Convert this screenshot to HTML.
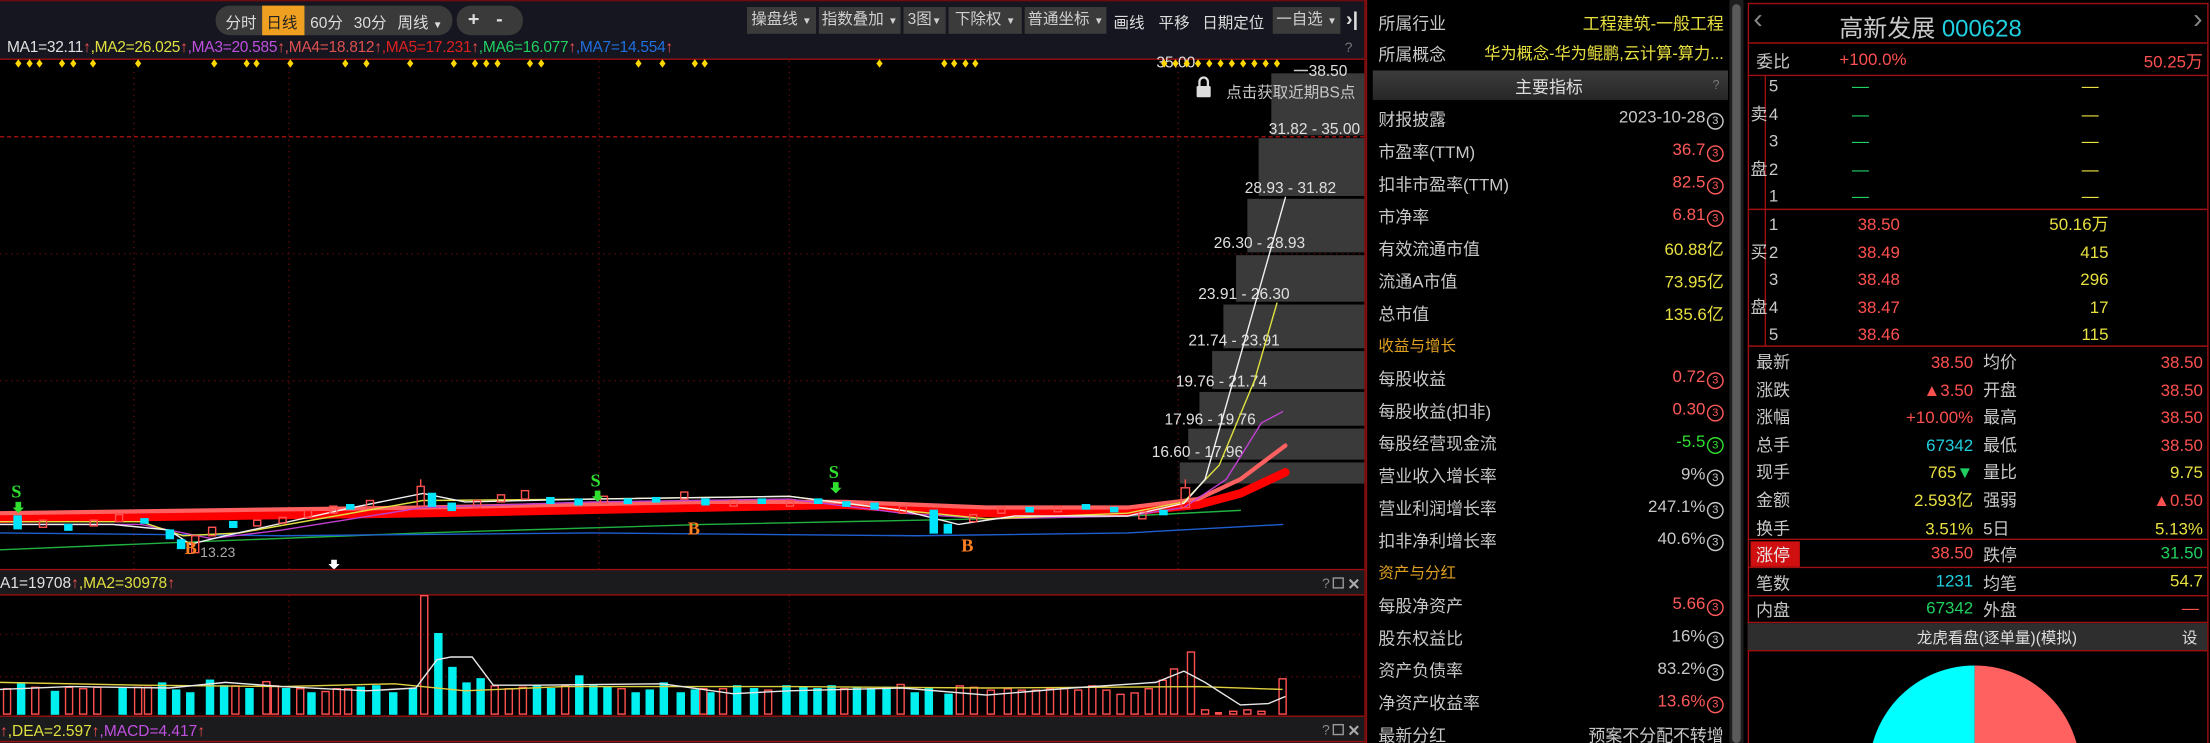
<!DOCTYPE html>
<html><head><meta charset="utf-8"><style>
html,body{margin:0;padding:0;background:#000;width:2210px;height:743px;overflow:hidden}
#w{position:absolute;left:0;top:0;width:1568px;height:527px;transform:scale(1.40944,1.40986);transform-origin:0 0;font-family:"Liberation Sans","Noto Sans CJK SC",sans-serif;color:#c8c8c8;overflow:hidden}
.a{position:absolute;white-space:nowrap}
.btn{position:absolute;top:5px;height:19px;line-height:19px;background:#3b3b3b;color:#d0d0d0;font-size:11px;text-align:center}
.n{font-family:"Liberation Sans Narrow","Liberation Sans","Noto Sans CJK SC",sans-serif}
.lab{position:absolute;left:978px;font-size:12px;color:#c8c8c8}
.val{position:absolute;right:345px;font-size:12px}
.c3{display:inline-block;width:10px;height:10px;border:1px solid currentColor;border-radius:50%;font-size:8px;line-height:10px;text-align:center;margin-left:1px;vertical-align:-1px}
.rp{position:absolute;font-size:12px}
</style></head><body><div id="w">

<div class="a" style="left:0;top:0;width:968px;height:28px;background:#15161f;border-top:1px solid #6a0c10"></div>
<div class="a" style="left:153px;top:4px;width:168px;height:21px;border-radius:10px;background:#3a3a3a"></div>
<div class="a" style="left:186px;top:4px;width:30px;height:21px;background:#f0a020"></div>
<div class="a" style="left:160px;top:8px;font-size:11px;color:#ddd">分时</div>
<div class="a" style="left:189px;top:8px;font-size:11px;color:#222">日线</div>
<div class="a" style="left:220px;top:8px;font-size:11px;color:#ddd">60分</div>
<div class="a" style="left:251px;top:8px;font-size:11px;color:#ddd">30分</div>
<div class="a" style="left:282px;top:8px;font-size:11px;color:#ddd">周线 <span style="font-size:7px">▼</span></div>
<div class="a" style="left:324px;top:4px;width:47px;height:21px;border-radius:10px;background:#3a3a3a"></div>
<div class="a" style="left:332px;top:5px;font-size:14px;color:#ddd;font-weight:bold">+</div>
<div class="a" style="left:352px;top:5px;font-size:14px;color:#ddd;font-weight:bold">-</div>
<div class="btn" style="left:530px;width:49px">操盘线 <span style="font-size:7px">▼</span></div>
<div class="btn" style="left:581px;width:58px">指数叠加 <span style="font-size:7px">▼</span></div>
<div class="btn" style="left:641px;width:30px">3图<span style="font-size:7px">▼</span></div>
<div class="btn" style="left:673px;width:52px">下除权 <span style="font-size:7px">▼</span></div>
<div class="btn" style="left:727px;width:58px">普通坐标 <span style="font-size:7px">▼</span></div>
<div class="a" style="left:790px;top:8px;font-size:11px;color:#ddd">画线</div>
<div class="a" style="left:822px;top:8px;font-size:11px;color:#ddd">平移</div>
<div class="a" style="left:853px;top:8px;font-size:11px;color:#ddd">日期定位</div>
<div class="btn" style="left:903px;width:48px">一自选 <span style="font-size:7px">▼</span></div>
<div class="a" style="left:955px;top:5px;font-size:14px;color:#ddd;font-weight:bold">›|</div>

<div class="a" style="left:0;top:28px;width:968px;height:14px;background:#15161f"></div>
<div class="a" style="left:5px;top:28px;font-size:11px;letter-spacing:-0.2px"><span style="color:#e0e0e0">MA1=32.11</span><span style="color:#f05050">↑</span><span style="color:#e0e040">,MA2=26.025</span><span style="color:#f05050">↑</span><span style="color:#c050e0">,MA3=20.585</span><span style="color:#f05050">↑</span><span style="color:#e05050">,MA4=18.812</span><span style="color:#f05050">↑</span><span style="color:#e02020">,MA5=17.231</span><span style="color:#f05050">↑</span><span style="color:#20d060">,MA6=16.077</span><span style="color:#f05050">↑</span><span style="color:#2070e0">,MA7=14.554</span><span style="color:#f05050">↑</span></div>
<div class="a" style="left:954px;top:29px;font-size:10px;color:#777">?</div>

<svg class="a" style="left:0;top:0" width="969" height="527" viewBox="0 0 969 527">
<line x1="0" y1="42" x2="968" y2="42" stroke="#9a1010" stroke-width="1"/>
<line x1="968.5" y1="0" x2="968.5" y2="527" stroke="#9a1010"/>
<g stroke="#5a0a0a" stroke-dasharray="1,3">
<line x1="95" y1="43" x2="95" y2="404"/><line x1="205" y1="43" x2="205" y2="404"/><line x1="425" y1="43" x2="425" y2="404"/><line x1="560" y1="43" x2="560" y2="404"/><line x1="836" y1="43" x2="836" y2="404"/>
<line x1="205" y1="422" x2="205" y2="508"/><line x1="560" y1="422" x2="560" y2="508"/>
<line x1="0" y1="180" x2="968" y2="180"/><line x1="0" y1="270" x2="968" y2="270"/>
<line x1="0" y1="450" x2="968" y2="450"/><line x1="0" y1="480" x2="968" y2="480"/>
</g>
<line x1="0" y1="97" x2="968" y2="97" stroke="#9a1010" stroke-dasharray="3,2"/>
<g fill="#3a3a3a">
<rect x="902" y="52" width="66" height="44"/>
<rect x="893" y="98" width="75" height="41"/>
<rect x="885" y="141" width="83" height="38"/>
<rect x="877" y="181" width="91" height="33"/>
<rect x="868" y="216" width="100" height="31"/>
<rect x="860" y="249" width="108" height="27"/>
<rect x="851" y="278" width="117" height="24"/>
<rect x="843" y="304" width="125" height="22"/>
<rect x="837" y="328" width="131" height="15"/>
</g>
<g fill="#e0e0e0" font-family="Liberation Sans,sans-serif" font-size="11" text-anchor="end">
<text x="956" y="54">38.50</text>
<text x="965" y="95">31.82 - 35.00</text>
<text x="948" y="137">28.93 - 31.82</text>
<text x="926" y="176">26.30 - 28.93</text>
<text x="915" y="212">23.91 - 26.30</text>
<text x="908" y="245">21.74 - 23.91</text>
<text x="899" y="274">19.76 - 21.74</text>
<text x="891" y="301">17.96 - 19.76</text>
<text x="882" y="324">16.60 - 17.96</text>
<text x="848" y="48">35.00</text>
</g>
<line x1="918" y1="50" x2="928" y2="50" stroke="#ccc"/>
<rect x="849" y="61" width="10" height="8" rx="1" fill="#ddd"/>
<path d="M851 61v-3a3 3 0 0 1 6 0v3" stroke="#ddd" stroke-width="1.6" fill="none"/>
<text x="870" y="69" fill="#c8c8c8" font-size="11" font-family="Liberation Sans,Noto Sans CJK SC,sans-serif">点击获取近期BS点</text>
<g fill="#ffd700" transform="translate(0,45)">
<path d="M13 -3l2.2 3-2.2 3-2.2-3z M21 -3l2.2 3-2.2 3-2.2-3z M28 -3l2.2 3-2.2 3-2.2-3z M44 -3l2.2 3-2.2 3-2.2-3z M52 -3l2.2 3-2.2 3-2.2-3z M66 -3l2.2 3-2.2 3-2.2-3z M98 -3l2.2 3-2.2 3-2.2-3z M152 -3l2.2 3-2.2 3-2.2-3z M175 -3l2.2 3-2.2 3-2.2-3z M182 -3l2.2 3-2.2 3-2.2-3z M206 -3l2.2 3-2.2 3-2.2-3z M245 -3l2.2 3-2.2 3-2.2-3z M260 -3l2.2 3-2.2 3-2.2-3z M291 -3l2.2 3-2.2 3-2.2-3z M322 -3l2.2 3-2.2 3-2.2-3z M337 -3l2.2 3-2.2 3-2.2-3z M345 -3l2.2 3-2.2 3-2.2-3z M353 -3l2.2 3-2.2 3-2.2-3z M376 -3l2.2 3-2.2 3-2.2-3z M384 -3l2.2 3-2.2 3-2.2-3z M453 -3l2.2 3-2.2 3-2.2-3z M470 -3l2.2 3-2.2 3-2.2-3z M493 -3l2.2 3-2.2 3-2.2-3z M500 -3l2.2 3-2.2 3-2.2-3z M624 -3l2.2 3-2.2 3-2.2-3z M670 -3l2.2 3-2.2 3-2.2-3z M677 -3l2.2 3-2.2 3-2.2-3z M685 -3l2.2 3-2.2 3-2.2-3z M692 -3l2.2 3-2.2 3-2.2-3z M826 -3l2.2 3-2.2 3-2.2-3z M834 -3l2.2 3-2.2 3-2.2-3z M842 -3l2.2 3-2.2 3-2.2-3z M850 -3l2.2 3-2.2 3-2.2-3z M858 -3l2.2 3-2.2 3-2.2-3z M866 -3l2.2 3-2.2 3-2.2-3z M874 -3l2.2 3-2.2 3-2.2-3z M882 -3l2.2 3-2.2 3-2.2-3z M890 -3l2.2 3-2.2 3-2.2-3z M898 -3l2.2 3-2.2 3-2.2-3z M906 -3l2.2 3-2.2 3-2.2-3z"/>
</g>
<g fill="none" stroke-linecap="round">
<path d="M0 390 L120 385 L300 378 L500 372 L700 368 L800 366 L880 362" stroke="#20b040" stroke-width="1"/>
<path d="M0 378 L200 380 L420 378 L650 380 L800 378 L910 372" stroke="#1e5fd0" stroke-width="1"/>
<path d="M0 368 L150 366 L300 364 L500 360 L600 358 L700 364 L800 363 L850 358 L880 350 L912 335" stroke="#ff0000" stroke-width="6"/>
<path d="M0 364 L150 362 L300 360 L500 356 L600 356 L700 360 L800 360 L850 354 L880 340 L912 316" stroke="#ff6060" stroke-width="3"/>
<path d="M0 372 L100 372 L150 382 L200 376 L300 360 L420 356 L560 354 L640 364 L700 368 L800 366 L840 360 L870 340 L895 300 L910 292" stroke="#c040d0" stroke-width="1"/>
<path d="M0 370 L100 370 L130 380 L170 378 L300 355 L420 354 L560 352 L640 362 L700 368 L800 364 L840 356 L865 330 L890 270 L906 215" stroke="#e0e040" stroke-width="1"/>
<path d="M0 372 L80 372 L120 376 L135 386 L160 380 L250 360 L300 350 L330 356 L420 354 L560 352 L640 362 L680 372 L720 366 L800 366 L840 357 L855 340 L875 270 L895 200 L912 140" stroke="#f0f0f0" stroke-width="1"/>
</g>
<g stroke-width="1">
<g fill="#00e5ff" stroke="#00e5ff">
<rect x="10" y="366" width="5" height="9"/><rect x="46" y="372" width="5" height="4"/><rect x="100" y="368" width="5" height="3"/>
<rect x="118" y="376" width="5" height="6"/><rect x="126" y="383" width="5" height="6"/><rect x="163" y="370" width="5" height="4"/>
<rect x="246" y="358" width="5" height="3"/><rect x="304" y="350" width="5" height="9"/><rect x="318" y="357" width="5" height="5"/>
<rect x="388" y="353" width="5" height="4"/><rect x="408" y="354" width="5" height="4"/><rect x="443" y="354" width="5" height="3"/>
<rect x="463" y="353" width="5" height="3"/><rect x="498" y="354" width="5" height="4"/><rect x="538" y="354" width="5" height="3"/>
<rect x="578" y="354" width="5" height="3"/><rect x="598" y="356" width="5" height="3"/><rect x="618" y="357" width="5" height="4"/>
<rect x="660" y="362" width="5" height="16"/><rect x="670" y="372" width="5" height="6"/><rect x="728" y="360" width="5" height="3"/>
<rect x="768" y="358" width="5" height="3"/><rect x="788" y="360" width="5" height="3"/><rect x="823" y="362" width="5" height="3"/>
</g>
<g fill="none" stroke="#ff5050">
<rect x="28" y="369" width="5" height="5"/><rect x="64" y="369" width="5" height="4"/><rect x="82" y="365" width="5" height="5"/>
<rect x="136" y="380" width="5" height="12"/><rect x="148" y="374" width="5" height="6"/><rect x="180" y="369" width="5" height="4"/>
<rect x="198" y="367" width="5" height="4"/><rect x="216" y="362" width="5" height="5"/><rect x="234" y="359" width="5" height="5"/>
<rect x="260" y="355" width="5" height="5"/><rect x="296" y="345" width="5" height="14"/><rect x="336" y="355" width="5" height="5"/>
<rect x="353" y="351" width="5" height="5"/><rect x="370" y="348" width="5" height="6"/><rect x="426" y="352" width="5" height="5"/>
<rect x="483" y="349" width="5" height="5"/><rect x="518" y="355" width="5" height="4"/><rect x="558" y="355" width="5" height="4"/>
<rect x="638" y="359" width="5" height="5"/><rect x="688" y="365" width="5" height="5"/><rect x="708" y="360" width="5" height="4"/>
<rect x="748" y="359" width="5" height="4"/><rect x="808" y="363" width="5" height="5"/><rect x="838" y="346" width="6" height="14"/>
</g>
<line x1="298.5" y1="340" x2="298.5" y2="345" stroke="#ff5050"/><line x1="841" y1="340" x2="841" y2="346" stroke="#ff5050"/>
</g>
<g font-family="Liberation Serif,serif" font-weight="bold" font-size="13">
<text x="8" y="353" fill="#30e030">S</text><text x="419" y="345" fill="#30e030">S</text><text x="588" y="339" fill="#30e030">S</text>
<text x="131" y="393" fill="#ff8020">B</text><text x="488" y="379" fill="#ff8020">B</text><text x="682" y="391" fill="#ff8020">B</text>
</g>
<g fill="#30e030"><path d="M11 356h4v4h2l-4 4-4-4h2z"/><path d="M422 348h4v4h2l-4 4-4-4h2z"/><path d="M591 342h4v4h2l-4 4-4-4h2z"/></g>
<text x="142" y="395" fill="#aaa" font-size="10" font-family="Liberation Sans,sans-serif">13.23</text>
<path d="M235 397h4v3h2l-4 4-4-4h2z" fill="#fff"/>
<rect x="0" y="404" width="968" height="18" fill="#1b1b1e"/>
<line x1="0" y1="404" x2="968" y2="404" stroke="#9a1010"/>
<line x1="0" y1="422" x2="968" y2="422" stroke="#9a1010"/>
<text x="0" y="417" font-size="11" font-family="Liberation Sans,sans-serif"><tspan fill="#e0e0e0">A1=19708</tspan><tspan fill="#f05050">↑</tspan><tspan fill="#e0e040">,MA2=30978</tspan><tspan fill="#f05050">↑</tspan></text>
<text x="938" y="417" fill="#888" font-size="10" font-family="Liberation Sans,sans-serif">?</text>
<rect x="946" y="410" width="7" height="7" fill="none" stroke="#999"/>
<text x="956" y="418" fill="#aaa" font-size="11" font-weight="bold" font-family="Liberation Sans,sans-serif">✕</text>
<g fill="#00f0f0">
<rect x="12" y="484" width="6" height="23"/><rect x="36" y="490" width="6" height="17"/><rect x="84" y="488" width="6" height="19"/>
<rect x="112" y="484" width="6" height="23"/><rect x="122" y="489" width="6" height="18"/><rect x="132" y="491" width="6" height="16"/>
<rect x="146" y="482" width="6" height="25"/><rect x="156" y="486" width="6" height="21"/><rect x="174" y="488" width="6" height="19"/>
<rect x="200" y="488" width="6" height="19"/><rect x="218" y="491" width="6" height="16"/><rect x="253" y="487" width="6" height="20"/>
<rect x="264" y="486" width="6" height="21"/><rect x="276" y="491" width="6" height="16"/><rect x="290" y="488" width="6" height="19"/>
<rect x="308" y="449" width="6" height="58"/><rect x="318" y="473" width="6" height="34"/><rect x="328" y="484" width="6" height="23"/>
<rect x="338" y="481" width="6" height="26"/><rect x="378" y="486" width="6" height="21"/><rect x="388" y="488" width="6" height="19"/>
<rect x="408" y="479" width="6" height="28"/><rect x="418" y="486" width="6" height="21"/><rect x="428" y="487" width="6" height="20"/>
<rect x="448" y="491" width="6" height="16"/><rect x="458" y="489" width="6" height="18"/><rect x="468" y="484" width="6" height="23"/>
<rect x="480" y="491" width="6" height="16"/><rect x="490" y="489" width="6" height="18"/><rect x="501" y="491" width="6" height="16"/>
<rect x="520" y="486" width="6" height="21"/><rect x="532" y="488" width="6" height="19"/><rect x="555" y="486" width="6" height="21"/>
<rect x="567" y="487" width="6" height="20"/><rect x="577" y="488" width="6" height="19"/><rect x="587" y="486" width="6" height="21"/>
<rect x="605" y="487" width="6" height="20"/><rect x="615" y="488" width="6" height="19"/><rect x="626" y="487" width="6" height="20"/>
<rect x="646" y="491" width="6" height="16"/><rect x="656" y="488" width="6" height="19"/><rect x="670" y="492" width="6" height="15"/>
</g>
<g fill="none" stroke="#ff5050">
<rect x="2.5" y="488.5" width="5" height="18"/><rect x="22.5" y="487.5" width="5" height="19"/><rect x="46.5" y="487.5" width="5" height="19"/>
<rect x="56.5" y="488.5" width="5" height="18"/><rect x="66.5" y="487.5" width="5" height="19"/><rect x="95.5" y="487.5" width="5" height="19"/>
<rect x="102.5" y="487.5" width="5" height="19"/><rect x="164.5" y="486.5" width="5" height="20"/><rect x="186.5" y="483.5" width="5" height="23"/>
<rect x="192.5" y="486.5" width="5" height="20"/><rect x="210.5" y="488.5" width="5" height="18"/><rect x="228.5" y="490.5" width="5" height="16"/>
<rect x="236.5" y="488.5" width="5" height="18"/><rect x="244.5" y="488.5" width="5" height="18"/><rect x="298.5" y="422.5" width="5" height="84"/>
<rect x="348.5" y="486.5" width="5" height="20"/><rect x="358.5" y="488.5" width="5" height="18"/><rect x="368.5" y="487.5" width="5" height="19"/>
<rect x="398.5" y="486.5" width="5" height="20"/><rect x="438.5" y="488.5" width="5" height="18"/><rect x="496.5" y="488.5" width="5" height="18"/>
<rect x="510.5" y="488.5" width="5" height="18"/><rect x="542.5" y="489.5" width="5" height="17"/><rect x="596.5" y="488.5" width="5" height="18"/>
<rect x="636.5" y="485.5" width="5" height="21"/><rect x="678.5" y="486.5" width="5" height="20"/><rect x="688.5" y="487.5" width="5" height="19"/>
<rect x="700.5" y="489.5" width="5" height="17"/><rect x="712.5" y="488.5" width="5" height="18"/><rect x="722.5" y="489.5" width="5" height="17"/>
<rect x="732.5" y="489.5" width="5" height="17"/><rect x="742.5" y="488.5" width="5" height="18"/><rect x="752.5" y="488.5" width="5" height="18"/>
<rect x="762.5" y="489.5" width="5" height="17"/><rect x="772.5" y="486.5" width="5" height="20"/><rect x="782.5" y="489.5" width="5" height="17"/>
<rect x="792.5" y="492.5" width="5" height="14"/><rect x="802.5" y="491.5" width="5" height="15"/><rect x="812.5" y="488.5" width="5" height="18"/>
<rect x="822.5" y="482.5" width="5" height="24"/><rect x="830.5" y="474.5" width="5" height="32"/><rect x="842.5" y="462.5" width="5" height="44"/>
<rect x="852.5" y="503.5" width="5" height="3"/><rect x="862.5" y="505.5" width="4" height="1"/><rect x="872.5" y="504.5" width="5" height="2"/>
<rect x="882.5" y="503.5" width="5" height="3"/><rect x="892.5" y="504.5" width="5" height="2"/><rect x="907.5" y="481.5" width="5" height="25"/>
</g>
<path d="M0 484 L100 486 L200 487 L280 485 L330 490 L400 487 L560 487 L700 488 L850 487 L910 489" stroke="#e0d040" fill="none"/>
<path d="M0 489 L50 487 L120 488 L160 484 L200 487 L260 490 L295 488 L310 468 L320 466 L335 466 L350 486 L380 486 L470 485 L520 492 L560 490 L640 488 L700 493 L760 488 L820 484 L840 476 L855 484 L880 500 L900 499 L912 494" stroke="#e8e8e8" fill="none"/>
<rect x="0" y="508" width="968" height="19" fill="#1b1b1e"/>
<line x1="0" y1="508" x2="968" y2="508" stroke="#9a1010"/>
<line x1="0" y1="526" x2="968" y2="526" stroke="#9a1010"/>
<text x="0" y="522" font-size="11" font-family="Liberation Sans,sans-serif"><tspan fill="#f05050">↑</tspan><tspan fill="#e0e040">,DEA=2.597</tspan><tspan fill="#f05050">↑</tspan><tspan fill="#c050e0">,MACD=4.417</tspan><tspan fill="#f05050">↑</tspan></text>
<text x="938" y="521" fill="#888" font-size="10" font-family="Liberation Sans,sans-serif">?</text>
<rect x="946" y="514" width="7" height="7" fill="none" stroke="#999"/>
<text x="956" y="522" fill="#aaa" font-size="11" font-weight="bold" font-family="Liberation Sans,sans-serif">✕</text>
</svg>

<div class="a" style="left:969px;top:0;width:258px;height:527px;background:#000;border-left:1px solid #8a1010"></div>
<div class="lab" style="top:8px">所属行业</div><div class="val" style="top:8px;color:#e8e040">工程建筑-一般工程</div>
<div class="lab" style="top:30px">所属概念</div><div class="val" style="top:30px;color:#e8e040;font-size:11.5px">华为概念-华为鲲鹏,云计算-算力...</div>
<div class="a" style="left:974px;top:50px;width:252px;height:21px;background:linear-gradient(#3c3c3c,#262626)"></div>
<div class="a" style="left:1075px;top:53px;font-size:12px;color:#ddd">主要指标</div>
<div class="a" style="left:1215px;top:55px;font-size:9px;color:#777">?</div>
<div class="lab" style="top:76px">财报披露</div><div class="val" style="top:76px;color:#c8c8c8">2023-10-28<span class="c3">3</span></div>
<div class="lab" style="top:99px">市盈率(TTM)</div><div class="val" style="top:99px;color:#ff5a5a">36.7<span class="c3">3</span></div>
<div class="lab" style="top:122px">扣非市盈率(TTM)</div><div class="val" style="top:122px;color:#ff5a5a">82.5<span class="c3">3</span></div>
<div class="lab" style="top:145px">市净率</div><div class="val" style="top:145px;color:#ff5a5a">6.81<span class="c3">3</span></div>
<div class="lab" style="top:168px">有效流通市值</div><div class="val" style="top:168px;color:#e8e040">60.88亿</div>
<div class="lab" style="top:191px">流通A市值</div><div class="val" style="top:191px;color:#e8e040">73.95亿</div>
<div class="lab" style="top:214px">总市值</div><div class="val" style="top:214px;color:#e8e040">135.6亿</div>
<div class="lab" style="top:237px;color:#e0a020;font-size:11px">收益与增长</div>
<div class="lab" style="top:260px">每股收益</div><div class="val" style="top:260px;color:#ff5a5a">0.72<span class="c3">3</span></div>
<div class="lab" style="top:283px">每股收益(扣非)</div><div class="val" style="top:283px;color:#ff5a5a">0.30<span class="c3">3</span></div>
<div class="lab" style="top:306px">每股经营现金流</div><div class="val" style="top:306px;color:#30e030">-5.5<span class="c3">3</span></div>
<div class="lab" style="top:329px">营业收入增长率</div><div class="val" style="top:329px;color:#c8c8c8">9%<span class="c3">3</span></div>
<div class="lab" style="top:352px">营业利润增长率</div><div class="val" style="top:352px;color:#c8c8c8">247.1%<span class="c3">3</span></div>
<div class="lab" style="top:375px">扣非净利增长率</div><div class="val" style="top:375px;color:#c8c8c8">40.6%<span class="c3">3</span></div>
<div class="lab" style="top:398px;color:#e0a020;font-size:11px">资产与分红</div>
<div class="lab" style="top:421px">每股净资产</div><div class="val" style="top:421px;color:#ff5a5a">5.66<span class="c3">3</span></div>
<div class="lab" style="top:444px">股东权益比</div><div class="val" style="top:444px;color:#c8c8c8">16%<span class="c3">3</span></div>
<div class="lab" style="top:467px">资产负债率</div><div class="val" style="top:467px;color:#c8c8c8">83.2%<span class="c3">3</span></div>
<div class="lab" style="top:490px">净资产收益率</div><div class="val" style="top:490px;color:#ff5a5a">13.6%<span class="c3">3</span></div>
<div class="lab" style="top:513px">最新分红</div><div class="val" style="top:513px;color:#c8c8c8">预案不分配不转增</div>

<div class="a" style="left:1227px;top:0;width:10px;height:527px;background:#1e1e1e"></div>
<div class="a" style="left:1229px;top:3px;width:6px;height:524px;background:#5a5a5a;border-radius:3px"></div>

<div class="a" style="left:1240px;top:2px;width:325px;height:530px;border:1px solid #a01010;border-bottom:none"></div>
<svg class="a" style="left:1238px;top:0" width="330" height="527">
<g stroke="#a01010"><line x1="2" y1="30.5" x2="328" y2="30.5"/><line x1="2" y1="53.5" x2="328" y2="53.5"/><line x1="2" y1="148.5" x2="328" y2="148.5"/><line x1="2" y1="245.5" x2="328" y2="245.5"/><line x1="2" y1="382.5" x2="328" y2="382.5"/><line x1="2" y1="402.5" x2="328" y2="402.5"/><line x1="2" y1="422.5" x2="328" y2="422.5"/><line x1="2" y1="441.5" x2="328" y2="441.5"/><line x1="2" y1="461.5" x2="328" y2="461.5"/><line x1="14.5" y1="54" x2="14.5" y2="245"/><line x1="303.5" y1="442" x2="303.5" y2="461"/></g>
<rect x="4" y="384" width="35" height="18" fill="#d01010"/>
<rect x="2" y="442" width="326" height="19" fill="#2e2e2e"/>
<path d="M163 472 A75 75 0 0 0 88 547 L163 547Z" fill="#00ffff"/>
<path d="M163 472 A75 75 0 0 1 238 547 L163 547Z" fill="#ff6060"/>
</svg>
<div class="a" style="left:1244px;top:3px;font-size:20px;color:#888">‹</div>
<div class="a" style="left:1556px;top:3px;font-size:20px;color:#888">›</div>
<div class="a" style="left:1305px;top:6px;font-size:17px;color:#c8c8c8">高新发展 <span class="n" style="color:#20d0e0">000628</span></div>
<div class="rp n" style="left:1246px;top:35px;color:#c8c8c8">委比</div>
<div class="rp n" style="left:1305px;top:35px;color:#ff5050">+100.0%</div>
<div class="rp n" style="right:5px;top:35px;color:#ff5050">50.25万</div>
<div class="rp" style="left:1242px;top:72px">卖</div><div class="rp" style="left:1242px;top:111px">盘</div>
<div class="rp" style="left:1242px;top:170px">买</div><div class="rp" style="left:1242px;top:209px">盘</div>
<div class="rp n" style="left:1255px;top:52px;line-height:19.6px">5<br>4<br>3<br>2<br>1</div>
<div class="rp n" style="left:1314px;top:52px;line-height:19.6px;color:#20d060">—<br>—<br>—<br>—<br>—</div>
<div class="rp n" style="left:1477px;top:52px;line-height:19.6px;color:#e8e040">—<br>—<br>—<br>—<br>—</div>
<div class="rp n" style="left:1255px;top:150px;line-height:19.6px">1<br>2<br>3<br>4<br>5</div>
<div class="rp n" style="left:1318px;top:150px;line-height:19.6px;color:#ff5050">38.50<br>38.49<br>38.48<br>38.47<br>38.46</div>
<div class="rp n" style="right:72px;top:150px;line-height:19.6px;color:#e8e040;text-align:right">50.16万<br>415<br>296<br>17<br>115</div>
<div class="rp n" style="left:1246px;top:248px;line-height:19.6px">最新<br>涨跌<br>涨幅<br>总手<br>现手<br>金额<br>换手</div>
<div class="rp n" style="left:1407px;top:248px;line-height:19.6px">均价<br>开盘<br>最高<br>最低<br>量比<br>强弱<br>5日</div>
<div class="rp n" style="right:168px;top:248px;line-height:19.6px;text-align:right"><span style="color:#ff5050">38.50</span><br><span style="color:#ff5050">▲3.50</span><br><span style="color:#ff5050">+10.00%</span><br><span style="color:#20d0e0">67342</span><br><span style="color:#e8e040">765</span><span style="color:#20d060">▼</span><br><span style="color:#e8e040">2.593亿</span><br><span style="color:#e8e040">3.51%</span></div>
<div class="rp n" style="right:5px;top:248px;line-height:19.6px;text-align:right"><span style="color:#ff5050">38.50</span><br><span style="color:#ff5050">38.50</span><br><span style="color:#ff5050">38.50</span><br><span style="color:#ff5050">38.50</span><br><span style="color:#e8e040">9.75</span><br><span style="color:#ff5050">▲0.50</span><br><span style="color:#e8e040">5.13%</span></div>
<div class="rp n" style="left:1246px;top:385px;color:#e8e8e8">涨停</div><div class="rp n" style="right:168px;top:385px;color:#ff5050">38.50</div><div class="rp n" style="left:1407px;top:385px">跌停</div><div class="rp n" style="right:5px;top:385px;color:#20d060">31.50</div>
<div class="rp n" style="left:1246px;top:405px">笔数</div><div class="rp n" style="right:168px;top:405px;color:#20d0e0">1231</div><div class="rp n" style="left:1407px;top:405px">均笔</div><div class="rp n" style="right:5px;top:405px;color:#e8e040">54.7</div>
<div class="rp n" style="left:1246px;top:424px">内盘</div><div class="rp n" style="right:168px;top:424px;color:#20d060">67342</div><div class="rp n" style="left:1407px;top:424px">外盘</div><div class="rp n" style="right:8px;top:424px;color:#ff5050">—</div>
<div class="rp" style="left:1360px;top:444px;font-size:11px;color:#ddd">龙虎看盘(逐单量)(模拟)</div>
<div class="rp" style="left:1548px;top:444px;font-size:11px;color:#ddd">设</div>
</div></body></html>
